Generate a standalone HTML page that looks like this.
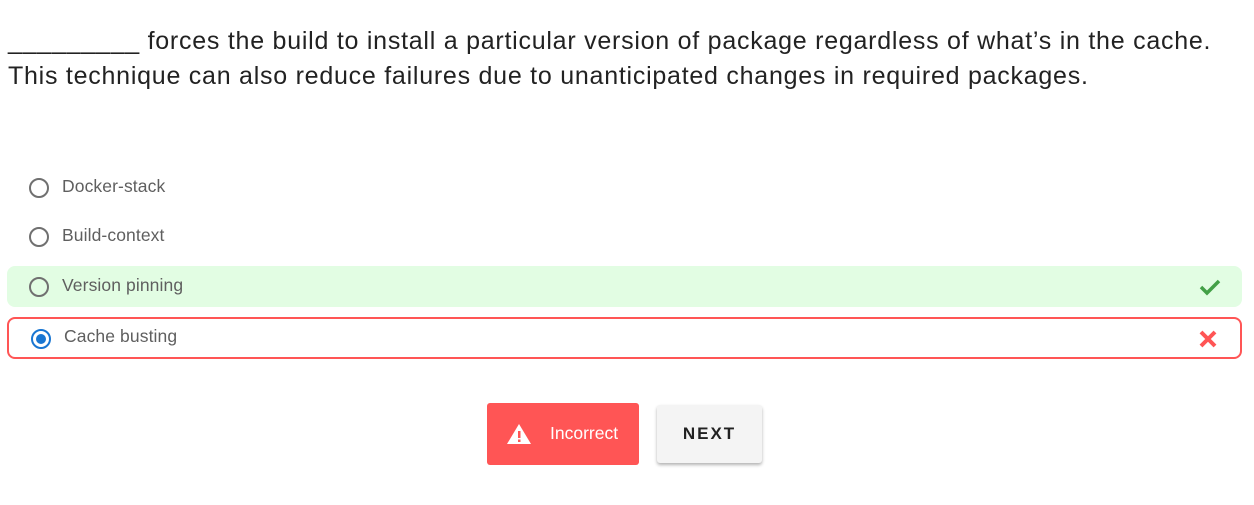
<!DOCTYPE html>
<html><head><style>
body{margin:0;background:#fff;font-family:"Liberation Sans",Roboto,sans-serif;width:1254px;height:505px;overflow:hidden;position:relative}
.q{position:absolute;left:8px;top:24px;font-size:25px;line-height:35px;color:#222;width:1225px;letter-spacing:0.75px}
.opt{position:absolute;left:7px;width:1235px;height:41px;box-sizing:border-box;border-radius:8px}
.opt .r{position:absolute;left:22px;top:11px;width:20px;height:20px;box-sizing:border-box;border:2px solid #707070;border-radius:50%}
.opt .t{position:absolute;left:55px;top:9px;font-size:17.5px;color:#5f5f5f;letter-spacing:0.1px}
.btn{position:absolute;border-radius:3px;display:flex;align-items:center;justify-content:center}
</style></head><body>
<div class="q">_________ forces the build to install a particular version of package regardless of what’s in the cache. This technique can also reduce failures due to unanticipated changes in required packages.</div>
<div class="opt" style="top:167px"><div class="r"></div><div class="t">Docker-stack</div></div>
<div class="opt" style="top:216px"><div class="r"></div><div class="t">Build-context</div></div>
<div class="opt" style="top:266px;background:#e2fde3"><div class="r"></div><div class="t">Version pinning</div>
<svg style="position:absolute;left:1192px;top:12px" width="22" height="18" viewBox="0 0 22 18"><path d="M2 9 L8 15 L20 3" stroke="#43a047" stroke-width="3.5" fill="none"/></svg></div>
<div class="opt" style="top:317px;height:42px;border:2px solid #f55"><div class="r" style="left:22px;top:10px;border-color:#1976d2"><div style="position:absolute;left:3px;top:3px;width:10px;height:10px;border-radius:50%;background:#1976d2"></div></div><div class="t" style="left:55px;top:7px">Cache busting</div>
<svg style="position:absolute;left:1189px;top:10px" width="20" height="20" viewBox="0 0 20 20"><path d="M3 3 L17 17 M17 3 L3 17" stroke="#f55" stroke-width="4" fill="none"/></svg></div>
<div class="btn" style="left:487px;top:403px;width:152px;height:62px;background:#f55;color:#fff;font-size:17.5px">
<svg style="position:absolute;left:19px;top:20px" width="26" height="22" viewBox="0 0 26 22"><path d="M13 1 L25 21 L1 21 Z" fill="#fff"/><rect x="12" y="8" width="2.5" height="7" fill="#f55"/><rect x="12" y="16.5" width="2.5" height="2.5" fill="#f55"/></svg>
<span style="position:absolute;left:63px;top:20px">Incorrect</span></div>
<div class="btn" style="left:657px;top:405px;width:105px;height:58px;background:#f4f4f4;box-shadow:0 2px 3px rgba(0,0,0,.3);font-size:17px;font-weight:bold;letter-spacing:2px;color:#222">NEXT</div>
</body></html>
